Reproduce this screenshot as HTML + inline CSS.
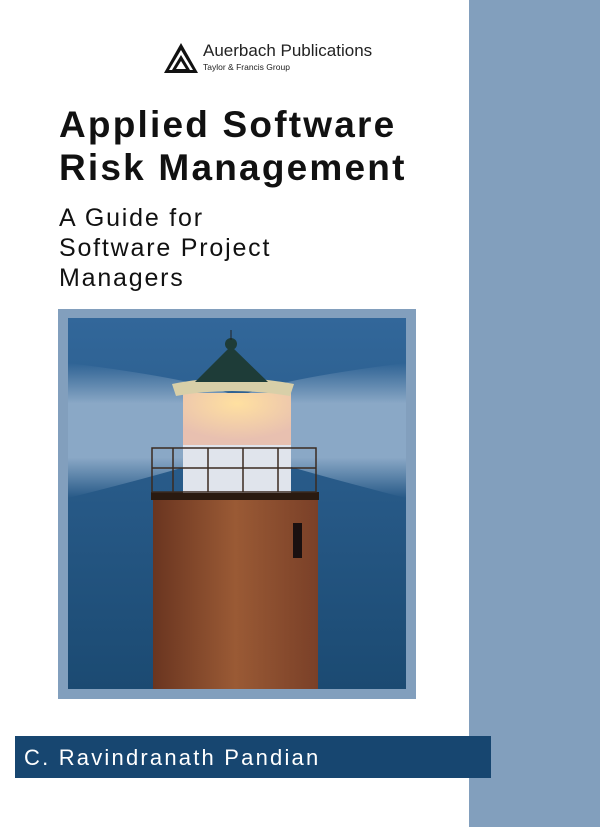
<!DOCTYPE html>
<html><head><style>
*{margin:0;padding:0}
body{width:600px;height:827px;background:#fff;position:relative;overflow:hidden;font-family:"Liberation Sans",sans-serif}
.abs{position:absolute}
.t{position:absolute;left:59px;white-space:nowrap;color:#111}
</style></head><body>
<div class="abs" style="left:469px;top:0;width:131px;height:827px;background:#829fbd"></div>

<svg class="abs" style="left:163px;top:42px" width="36" height="32" viewBox="0 0 36 32">
<polygon points="18,1 35,31 1,31" fill="#111"/>
<polygon points="18,8 30,28 6,28" fill="#fff"/>
<polygon points="18,13 27,28 9,28" fill="#111"/>
<polygon points="18,19 23,27 13,27" fill="#fff"/>
</svg>
<div class="abs" style="left:203px;top:41px;font-size:17px;color:#222">Auerbach Publications</div>
<div class="abs" style="left:203px;top:62px;font-size:8.5px;color:#222">Taylor &amp; Francis Group</div>

<div class="t" style="top:104px;font-size:37px;font-weight:bold;letter-spacing:2.2px">Applied Software</div>
<div class="t" style="top:147px;font-size:37px;font-weight:bold;letter-spacing:2.2px">Risk Management</div>
<div class="t" style="top:204px;font-size:25px;letter-spacing:1.8px">A Guide for</div>
<div class="t" style="top:234px;font-size:25px;letter-spacing:1.8px">Software Project</div>
<div class="t" style="top:264px;font-size:25px;letter-spacing:1.8px">Managers</div>

<div class="abs" style="left:58px;top:309px;width:358px;height:390px;background:#829fbd"></div>
<svg class="abs" style="left:68px;top:318px" width="338" height="371" viewBox="0 0 338 371">
<defs>
<linearGradient id="sky" x1="0" y1="0" x2="0" y2="1"><stop offset="0" stop-color="#32679a"/><stop offset="1" stop-color="#1b4a72"/></linearGradient>
<linearGradient id="beam" x1="0" y1="0" x2="0" y2="1"><stop offset="0" stop-color="#8aa8c6" stop-opacity="0"/><stop offset=".3" stop-color="#8aa8c6"/><stop offset=".7" stop-color="#8aa8c6"/><stop offset="1" stop-color="#8aa8c6" stop-opacity="0"/></linearGradient>
<linearGradient id="brick" x1="0" y1="0" x2="1" y2="0"><stop offset="0" stop-color="#6a3520"/><stop offset=".5" stop-color="#9a5a35"/><stop offset="1" stop-color="#7a4028"/></linearGradient>
<radialGradient id="glow" cx=".5" cy=".2" r=".7"><stop offset="0" stop-color="#ffe0a0"/><stop offset="1" stop-color="#e8c0b0"/></radialGradient>
</defs>
<rect width="338" height="371" fill="url(#sky)"/>
<path d="M0,45 Q120,60 160,75 L160,135 Q120,150 0,180Z" fill="url(#beam)"/>
<path d="M338,45 Q220,60 180,75 L180,135 Q220,150 338,180Z" fill="url(#beam)"/>
<rect x="85" y="180" width="165" height="191" fill="url(#brick)"/>
<rect x="83" y="174" width="168" height="8" fill="#2a1a10"/>
<rect x="225" y="205" width="9" height="35" fill="#1a1010"/>
<rect x="115" y="125" width="108" height="50" fill="#e0e4ec"/>
<rect x="115" y="75" width="108" height="52" fill="url(#glow)"/>
<g stroke="#3a2a20" stroke-width="1.5" fill="none">
<rect x="84" y="130" width="164" height="44"/>
<line x1="84" y1="150" x2="248" y2="150"/>
<line x1="105" y1="130" x2="105" y2="174"/><line x1="140" y1="130" x2="140" y2="174"/><line x1="175" y1="130" x2="175" y2="174"/><line x1="210" y1="130" x2="210" y2="174"/>
</g>
<path d="M104,66 Q163,54 226,66 L222,78 Q163,68 108,78Z" fill="#d8cfa8"/>
<polygon points="163,28 200,64 127,64" fill="#1e3c38"/>
<circle cx="163" cy="26" r="6" fill="#1e3c38"/>
<line x1="163" y1="12" x2="163" y2="22" stroke="#222"/>
</svg>

<div class="abs" style="left:15px;top:736px;width:476px;height:42px;background:#174670"></div>
<div class="abs" style="left:24px;top:745px;font-size:22px;color:#fff;letter-spacing:2.2px">C. Ravindranath Pandian</div>
</body></html>
